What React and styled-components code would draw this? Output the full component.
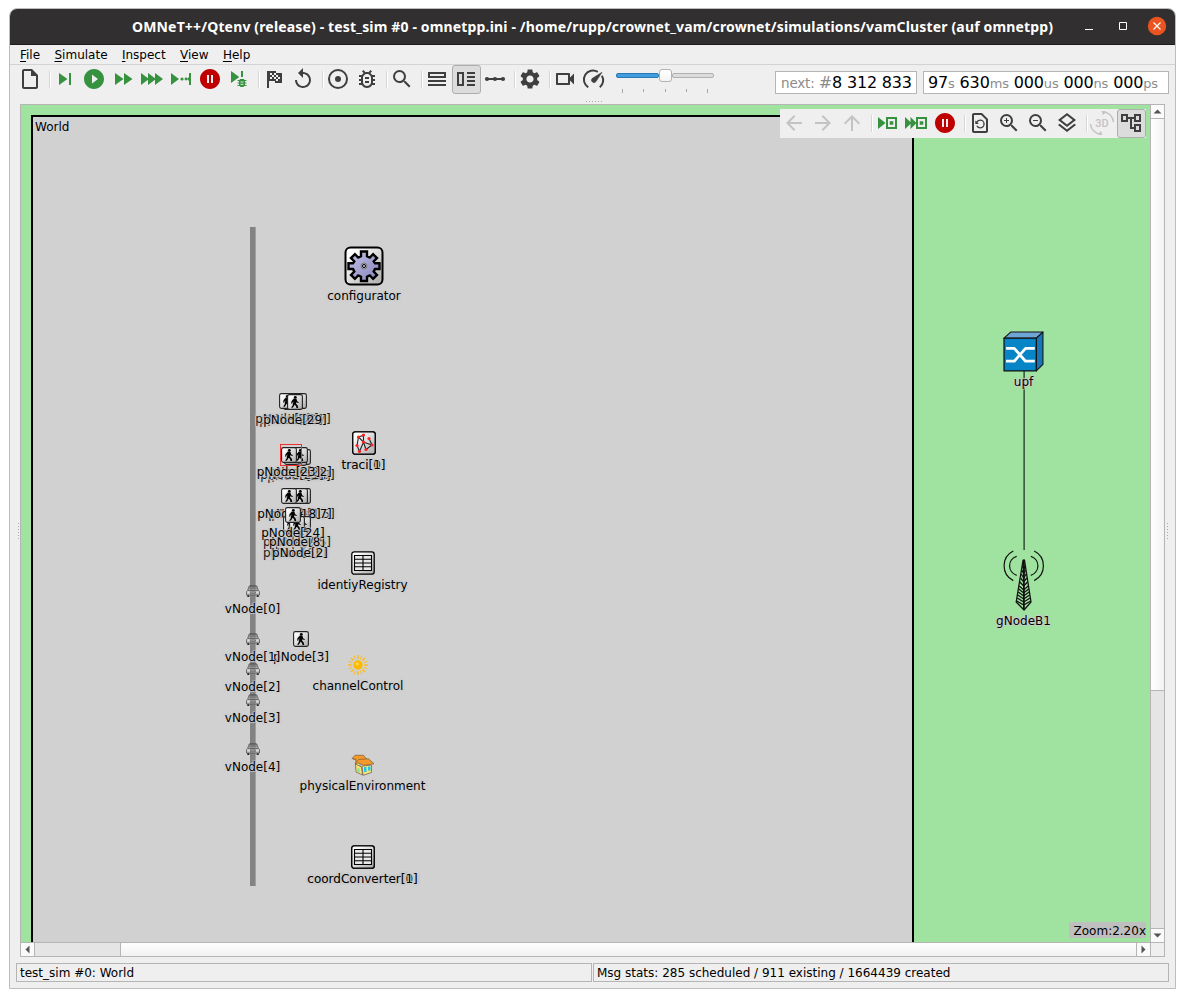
import React from 'react';
import styled, { createGlobalStyle, css } from 'styled-components';
import {
  MdOutlineInsertDriveFile, MdSkipNext, MdPlayCircleFilled, MdFastForward, MdPauseCircleFilled,
  MdReplay, MdOutlineBugReport, MdSearch, MdSettings, MdOutlineVideocam, MdArrowBack,
  MdArrowForward, MdArrowUpward, MdOutlineRestorePage, MdZoomIn, MdZoomOut, MdOutlineLayers,
  MdOutlineAccountTree,
} from 'react-icons/md';

const GlobalStyle = createGlobalStyle`
  * { box-sizing: border-box; }
  body { margin: 0; background: #fff; font: 12px/14px "DejaVu Sans", sans-serif; color: #000; }
  svg { display: block; flex: none; }
`;

const GREEN = '#37923f';
const DARK = '#3f3f3f';
const RED = '#bf0000';
const OFF = '#c3c3c3';

const Page = styled.div`
  width: 1185px;
  height: 998px;
  padding: 8px 9px 9px;
  overflow: hidden;
`;
const Window = styled.div`
  width: 1167px;
  height: 981px;
  display: flex;
  flex-direction: column;
  background: #efefef;
  border: 1px solid #bdbdbd;
  border-radius: 8px 8px 0 0;
  overflow: hidden;
`;
const TitleBar = styled.header`
  height: 36px;
  flex: none;
  display: flex;
  align-items: center;
  background: #322f30;
  border-bottom: 1px solid #1d1b1c;
  color: #fff;
`;
const Title = styled.h1`
  margin: 0;
  padding-left: 122px;
  width: 1062px;
  white-space: nowrap;
  font: bold 14px/20px "Noto Sans", sans-serif;
  letter-spacing: 0.155px;
`;
const WindowButton = styled.button`
  width: 34px;
  height: 32px;
  margin-bottom: 2px;
  padding: 0;
  border: 0;
  background: none;
  display: flex;
  align-items: center;
  justify-content: center;
`;
const MenuBar = styled.nav`
  height: 20px;
  flex: none;
  display: flex;
  gap: 14.4px;
  padding: 3px 10px 0;
  border-bottom: 1px solid #d3d3d3;
`;
const MenuItem = styled.div`
  &::first-letter { text-decoration: underline; text-underline-offset: 2px; }
`;
const ToolRow = styled.div`
  height: 33px;
  flex: none;
  display: flex;
  padding-left: 6px;
`;
const ToolButton = styled.button`
  width: 29px;
  height: 29px;
  flex: none;
  display: flex;
  align-items: flex-start;
  justify-content: flex-start;
  padding: 2px;
  border: 0;
  border-radius: 3px;
  background: none;
  color: ${(p) => p.$color || DARK};
  ${(p) => p.$active && css`
    padding: 1px;
    border: 1px solid #adadad;
    background: #dcdcdc;
  `}
`;
const Separator = styled.span`
  width: 6px;
  height: 17px;
  margin-top: 6px;
  flex: none;
  border-left: 1px solid #d6d6d6;
  box-shadow: inset 1px 0 #fff;
  margin-left: 4px;
  margin-right: -4px;
`;
const SliderBox = styled.div`
  width: 98px;
  margin-left: 7px;
  padding-top: 4px;
`;
const Track = styled.div`
  height: 13px;
  display: flex;
  align-items: center;
`;
const Groove = styled.span`
  height: 5px;
  width: ${(p) => p.$w}px;
  border: 1px solid ${(p) => (p.$on ? '#2a79b0' : '#b0b0b0')};
  background: ${(p) => (p.$on ? '#3f9de0' : '#dcdcdc')};
  border-radius: 2px;
`;
const Thumb = styled.span`
  width: 13px;
  height: 13px;
  border: 1px solid #b2b2b2;
  border-radius: 3px;
  background: linear-gradient(#fff, #f4f4f4);
`;
const Ticks = styled.div`
  display: flex;
  justify-content: space-between;
  padding: 0 6px;
  margin-top: 7px;
`;
const Tick = styled.i`
  width: 1px;
  height: ${(p) => (p.$long ? 4 : 3)}px;
  background: #a8a8a8;
`;
const Readout = styled.div`
  width: ${(p) => p.$w}px;
  height: 23px;
  margin: 6px 0 0 ${(p) => p.$gap}px;
  padding-left: ${(p) => p.$pad}px;
  border: 1px solid #b5b5b5;
  background: #fff;
  font-size: 16px;
  line-height: 21px;
  letter-spacing: ${(p) => p.$tracking || 0}px;
  white-space: pre;
  flex: none;
`;
const Unit = styled.span`
  font-size: ${(p) => p.$size || 13}px;
  color: #8c8c8c;
`;
const Hash = styled.span`
  color: #8c8c8c;
`;
const Grip = styled.div`
  height: 6px;
  flex: none;
  display: flex;
  justify-content: center;
  gap: 2px;
  padding: 3px 0 0 2px;
  i { width: 1px; height: 1px; background: #aaa; }
`;
const Middle = styled.main`
  display: flex;
  flex: none;
  height: 853px;
`;
const SideGrip = styled.div`
  width: ${(p) => p.$w}px;
  display: flex;
  flex-direction: column;
  align-items: center;
  justify-content: center;
  gap: 2px;
  padding-left: ${(p) => p.$pad}px;
  i { width: 1px; height: 1px; background: #aaa; }
`;
const Frame = styled.div`
  width: 1145px;
  height: 853px;
  flex: none;
  display: grid;
  grid-template-columns: 1129px 14px;
  grid-template-rows: 837px 14px;
  border: 1px solid #b5b5b5;
`;
const Scene = styled.div`
  position: relative;
  overflow: hidden;
  background: #a0e2a0;
`;
const World = styled.div`
  width: 883px;
  height: 840px;
  margin: 10px 0 0 10px;
  padding: 3px 2px;
  border: 2px solid #000;
  background: #d1d1d1;
`;
const Road = styled.div`
  position: absolute;
  left: 229px;
  top: 122px;
  width: 6px;
  height: 659px;
  background: #838383;
  border-right: 1px solid #a0a0a0;
`;
const Link = styled.div`
  position: absolute;
  left: 1002px;
  top: 266px;
  width: 2px;
  height: 179px;
  background: linear-gradient(90deg, #5d855d 50%, #426042 50%);
`;
const Node = styled.div`
  position: absolute;
  left: ${(p) => p.$x}px;
  top: ${(p) => p.$y}px;
  width: 0;
  display: flex;
  flex-direction: column;
  align-items: center;
`;
const Label = styled.span`
  margin-top: ${(p) => (p.$gap === undefined ? 3 : p.$gap)}px;
  line-height: 14px;
  white-space: nowrap;
  color: ${(p) => (p.$dim ? '#181818' : '#000')};
  text-shadow: ${['1px 0', '-1px 0', '0 1px', '0 -1px', '1px 1px', '-1px 1px', '1px -1px', '-1px -1px']
    .map((o) => `${o} 1px rgba(209,209,209,.5)`).join(',')};
`;
const FloatBar = styled.div`
  position: absolute;
  left: 759px;
  top: 4px;
  display: flex;
  background: #efefef;
`;
const ZoomBadge = styled.div`
  position: absolute;
  right: 4px;
  bottom: 4px;
  width: 77px;
  height: 16px;
  padding-top: 1px;
  text-align: right;
  line-height: 16px;
  background: #bfbfbf;
`;
const VScroll = styled.div`
  display: flex;
  flex-direction: column;
  border-left: 1px solid #b5b5b5;
  background: #e5e5e5;
`;
const HScroll = styled.div`
  display: flex;
  border-top: 1px solid #b5b5b5;
  background: #e5e5e5;
`;
const ScrollArrow = styled.button`
  width: 13px;
  height: 13px;
  flex: none;
  padding: 0;
  border: 0;
  display: flex;
  align-items: center;
  justify-content: center;
  background: #fafafa;
`;
const VHandle = styled.div`
  height: 573px;
  border: solid #b5b5b5;
  border-width: 1px 0;
  background: linear-gradient(90deg, #fff, #f3f3f3);
`;
const HHandle = styled.div`
  width: 1017px;
  border: solid #b5b5b5;
  border-width: 0 1px;
  background: linear-gradient(#fff, #f1f1f1);
`;
const Trough = styled.div`
  flex: 1;
  border: 0 solid #b5b5b5;
  border-left-width: ${(p) => (p.$v ? 0 : 1)}px;
  border-bottom-width: ${(p) => (p.$v ? 1 : 0)}px;
`;
const Corner = styled.div`
  border: solid #b5b5b5;
  border-width: 1px 0 0 1px;
`;
const StatusBar = styled.footer`
  display: flex;
  gap: 1px;
  padding: 6px 6px 0;
`;
const StatusCell = styled.div`
  width: 576px;
  height: 19px;
  border: 1px solid #b5b5b5;
  padding-left: 3px;
  line-height: 18px;
`;

const Ic = ({ children, fill = 'currentColor', size, ...rest }) => (
  <svg width="24" height="24" viewBox="0 0 24 24" fill={fill} {...rest}>{children}</svg>
);
const Express = () => <Ic><path d="M1 6l8 6-8 6zM8 6l8 6-8 6zM15 6l8 6-8 6z" /></Ic>;
const Until = () => (
  <Ic><path d="M2 6l8 6-8 6zM20 6h2v12h-2v-4l-2-2 2-2z" /><circle cx="13" cy="12" r="1.6" /><circle cx="17" cy="12" r="1.4" /></Ic>
);
const DebugNext = () => (
  <Ic>
    <path d="M4 4l8.300 6L4 16zM14 4h2v6h-2z" />
    <path d="M13 12h4l1 2v4l-1.500 2h-3L12 18v-4z" />
    <path d="M10.500 13.500h9M10.500 16h9M10.500 18.500h9" stroke="currentColor" strokeWidth="1" />
    <path d="M13.500 15h3M13.500 17.300h3" stroke="#efefef" strokeWidth=".9" />
  </Ic>
);
const Flag = () => (
  <Ic>
    <path d="M5 4h2v17H5z" />
    <path d="M6 4h8v2h6v10h-7v-2H6z" />
    <path d="M8 6h2v2H8zM12 6h2v2h-2zM10 8h2v2h-2zM14 8h2v2h-2zM8 10h2v2H8zM12 10h2v2h-2zM16 10h2v2h-2zM14 12h2v2h-2z" fill="#efefef" />
  </Ic>
);
const Target = () => <Ic><circle cx="12" cy="12" r="9" fill="none" stroke="currentColor" strokeWidth="2" /><circle cx="12" cy="12" r="3" /></Ic>;
const Rows = () => <Ic fill="none" stroke="currentColor" strokeWidth="2"><path d="M4 6h16v4H4zM3 14h18M3 18h18" /></Ic>;
const Split = () => <Ic fill="none" stroke="currentColor" strokeWidth="2"><path d="M4 6h5v12H4zM13 6h8M13 10h8M13 14h8M13 18h8" /></Ic>;
const Timeline = () => <Ic><path d="M3 11h18v2H3z" /><circle cx="4" cy="12" r="2.100" /><circle cx="12" cy="12" r="2.100" /><circle cx="20" cy="12" r="2.100" /></Ic>;
const Gauge = () => (
  <Ic>
    <path d="M6.200 20.300A9 9 0 0 1 15.800 4.800M19.900 8.700a9 9 0 0 1-2.100 11.600" fill="none" stroke="currentColor" strokeWidth="2" />
    <path d="M20 5.300l-6 9.300a2.500 2.500 0 0 1-4-3z" stroke="currentColor" strokeWidth=".6" strokeLinejoin="round" />
  </Ic>
);
const ModStep = () => <Ic><path d="M3 6l7.500 6L3 18zM11 6h11v12H11zm2 2v8h7V8z" fillRule="evenodd" /><path d="M14.700 10.200h3.600v3.600h-3.600z" /></Ic>;
const ModFast = () => <Ic><path d="M1 6l6.500 6L1 18zM6.500 6l6 6-6 6z" /><path d="M12 6h11v12H12zm2 2v8h7V8z" fillRule="evenodd" /><path d="M15.700 10.200h3.600v3.600h-3.600z" /></Ic>;
const Rotate3D = () => (
  <Ic overflow="visible">
    <text x="12" y="16" textAnchor="middle" fontFamily="Roboto, sans-serif" fontSize="11" fontWeight="500">3D</text>
    <path d="M13 1c6 .2 10 4.500 10.500 10M11 23C5 22.800 1 18.500.5 13" fill="none" stroke="currentColor" strokeWidth="1.500" />
    <path d="M11.500 0l5 .5-3.500 3.500zM12.500 24l-5-.5 3.500-3.500z" />
  </Ic>
);

const mainTools = [
  [MdOutlineInsertDriveFile, DARK], null,
  [MdSkipNext, GREEN], [MdPlayCircleFilled, GREEN], [MdFastForward, GREEN], [Express, GREEN],
  [Until, GREEN], [MdPauseCircleFilled, RED], [DebugNext, GREEN], null,
  [Flag, DARK], [MdReplay, DARK], null,
  [Target, DARK], [MdOutlineBugReport, DARK], null,
  [MdSearch, DARK], null,
  [Rows, DARK], [Split, DARK, true], [Timeline, DARK], null,
  [MdSettings, DARK], null,
  [MdOutlineVideocam, DARK], [Gauge, DARK],
];
const viewTools = [
  [MdArrowBack, OFF], [MdArrowForward, OFF], [MdArrowUpward, OFF], null,
  [ModStep, GREEN], [ModFast, GREEN], [MdPauseCircleFilled, RED], null,
  [MdOutlineRestorePage, DARK], [MdZoomIn, DARK], [MdZoomOut, DARK], [MdOutlineLayers, DARK], null,
  [Rotate3D, OFF], [MdOutlineAccountTree, DARK, true],
];
const Tools = ({ items }) => items.map((t, i) => {
  if (!t) return <Separator key={i} />;
  const [Icon, color, active] = t;
  return <ToolButton key={i} $color={color} $active={active}><Icon size={24} /></ToolButton>;
});

const HiddenDefs = styled.svg`
  position: absolute;
`;
const Defs = () => (
  <HiddenDefs width="0" height="0">
    <defs>
      <linearGradient id="plate" x1="0" y1="0" x2="1" y2="1">
        <stop offset="0.15" stopColor="#fff" /><stop offset="1" stopColor="#aaa" />
      </linearGradient>
      <linearGradient id="gear" x1="0" y1="0" x2="1" y2="1">
        <stop offset="0" stopColor="#c4c2ea" /><stop offset="1" stopColor="#8582b8" />
      </linearGradient>
    </defs>
  </HiddenDefs>
);
const Walker = () => (
  <svg width="16" height="16" viewBox="0 0 16 16">
    <rect x=".6" y=".6" width="14.8" height="14.8" rx="1.8" fill="url(#plate)" stroke="#222" strokeWidth="1.1" />
    <circle cx="8.300" cy="3.300" r="1.400" />
    <path d="M6.800 4.600h2.600l.8 2.600 1.700 1-.5.900-2.100-.9-.2 1.500 1.600 1.700.5 2.600H9.500l-.5-2-1.500-1.300-.8 1.800-1.500 1.500-1-.6 1.400-1.900.8-4-.8.7-.4 1.600-1.100-.2.400-2.400z" />
  </svg>
);
const Car = () => (
  <svg width="16" height="16" viewBox="0 0 16 16">
    <path d="M4.200 3h7.600l1.500 4.300 1.200 1.200v3.500H1.500V8.500l1.200-1.200z" fill="#b5b5b5" fillOpacity=".6" stroke="#555" strokeWidth=".8" />
    <path d="M4.500 3h7M4 5h8M3 7.300h10" stroke="#444" strokeWidth=".8" />
    <path d="M2.500 9.300h2.300M11.200 9.300h2.300" stroke="#ddd" strokeWidth="1.300" />
    <path d="M5.500 9h5v1.500h-5z" fill="none" stroke="#666" strokeWidth=".6" />
    <path d="M2.300 12.300h2V14h-2zM11.700 12.300h2V14h-2z" fill="#222" />
  </svg>
);
const Table = () => (
  <svg width="24" height="24" viewBox="0 0 24 24">
    <rect x=".8" y=".8" width="22.400" height="22.400" rx="2.500" fill="url(#plate)" stroke="#000" strokeWidth="1.300" />
    <path d="M3.500 4.500h17v15h-17z" fill="#e8e8e8" />
    <path d="M3.500 4.500h17v15h-17zM12 4.500v15M3.500 8.300h17M3.500 12h17M3.500 15.800h17" fill="none" stroke="#000" strokeWidth="1.100" />
  </svg>
);
const Traci = () => (
  <svg width="24" height="24" viewBox="0 0 24 24">
    <rect x=".8" y=".8" width="22.400" height="22.400" rx="2.500" fill="url(#plate)" stroke="#000" strokeWidth="1.300" />
    <path d="M6.500 6l5-1.800v7L20 14l-6 4.500M6.500 6L5 14.500 7.500 20.500l4-9.300L6.500 6M11.500 11.200L14 18.500M17 7.500l3 6.500" fill="none" stroke="#222" strokeWidth="1.100" />
    {[[6.5, 6], [11.5, 4], [11.5, 11], [17, 7.5], [5, 14.5], [20, 14], [14, 18.5], [7.5, 20.5]].map(([x, y]) => <circle key={`${x}-${y}`} cx={x} cy={y} r="1.600" fill="#f22" />)}
  </svg>
);
const Gear = () => (
  <svg width="40" height="40" viewBox="0 0 40 40">
    <rect x="1.500" y="1.500" width="37" height="37" rx="5" fill="url(#plate)" stroke="#000" strokeWidth="2" />
    <path d="M17 5.500h6v4.800l2.800 1.200 3.300-3.300 3.900 3.900-3.300 3.300L31 17.300h4.500v5.700H31l-1.300 2.600 3.300 3.300-3.900 3.900-3.300-3.300-2.800 1.200V35h-6v-4.300l-2.800-1.200-3.300 3.300-3.900-3.900 3.300-3.300L9 23H4.500v-5.700H9l1.300-1.900L7 12.100l3.900-3.900 3.300 3.300 2.800-1.200z" fill="url(#gear)" stroke="#000" strokeWidth="2.400" />
    <circle cx="20" cy="20" r="3" fill="#ddd" stroke="#777" strokeWidth="1" /><circle cx="20" cy="20" r="1.700" fill="#99c" stroke="#111" />
  </svg>
);
const Sun = () => (
  <svg width="22" height="22" viewBox="0 0 22 22">
    {Array.from({ length: 16 }, (_, i) => (
      <path key={i} d="M11 4.800V1" stroke="#fdbb10" strokeWidth={i % 2 ? 0.9 : 1.4} transform={`rotate(${i * 22.5} 11 11)`} />
    ))}
    <circle cx="11" cy="11" r="4.700" fill="#fdb900" /><circle cx="10.300" cy="10" r="1.800" fill="#ffd540" />
  </svg>
);
const House = () => (
  <svg width="24" height="22" viewBox="0 0 24 22">
    <path d="M2 5h3v10l4 3V6z" fill="#f4e16c" stroke="#765" strokeWidth=".7" />
    <path d="M1 4.500L4 1.300h8.500l3 3.700-6 2-4 1.500L4.500 5z" fill="#f59a28" stroke="#864" strokeWidth=".8" />
    <path d="M4.500 10l6 3 1 8-6.500-3zM11 12l9.500-1v7.500L12 21.300z" fill="#f5e476" stroke="#765" strokeWidth=".8" />
    <path d="M4 9.500l3.500-4 10-.7 5.500 5-10.500 1.600-4.500-2.400z" fill="#f59a28" stroke="#864" strokeWidth=".8" />
    <path d="M13 13h2.500v5H13zM17 12.500h2.500v4H17z" fill="#20c6ee" /><path d="M6.500 14l2 1v3.700l-2-1z" fill="#72e09c" />
  </svg>
);
const Switch = () => (
  <svg width="41" height="41" viewBox="0 0 40 40" preserveAspectRatio="none" strokeLinejoin="round">
    <path d="M1 7L7.500 1H39L32.500 7z" fill="#6fa5d5" stroke="#111" />
    <path d="M32.500 7L39 1v31.500L32.500 39z" fill="#1975b5" stroke="#111" />
    <path d="M1 7h31.500v32H1z" fill="#0785c7" stroke="#111" strokeWidth="1.200" />
    <path d="M3 17h8l11 12.500h9M3 29.500h8L22 17h9" fill="none" stroke="#fff" strokeWidth="2.700" />
  </svg>
);
const Tower = () => (
  <svg width="43" height="62" viewBox="0 0 43 62" fill="none" stroke="#111">
    <path d="M11.300 2a16.500 16.500 0 0 0 0 29.600M14.700 7.300a9.900 9.900 0 0 0 0 19M32.200 2a16.500 16.500 0 0 1 0 29.600M28.800 7.300a9.900 9.900 0 0 1 0 19" strokeWidth="1.200" />
    <path d="M21 11.500L14.200 53l7.800 8 7-8-6.500-41.500z" strokeWidth="1.300" />
    <path d="M21.900 10.500v50" strokeWidth="1.800" />
    {[17, 21, 25, 29, 33, 37, 40, 43, 46, 49, 52].map((y) => {
      const w = (y - 10) * 0.165;
      return <path key={y} d={`M${21.7 - w} ${y}l${w} 4 ${w}-4`} strokeWidth="1.300" />;
    })}
  </svg>
);
const Selection = styled.div`
  position: absolute;
  left: 259px;
  top: 339px;
  width: 22px;
  height: 22px;
  border: 1px solid #f03030;
`;

const shapes = { walker: Walker, car: Car, table: Table, traci: Traci, gear: Gear, sun: Sun, house: House, sw: Switch, tower: Tower };
/* kind, centre x, icon top, label, dimmed, label gap */
const nodes = [
  ['gear', 343, 141, 'configurator'],
  ['walker', 278, 288, 'pNode[27]', true], ['walker', 270, 289, 'pNode[28]', true], ['walker', 266, 288, 'pNode[26]', true], ['walker', 274, 289, 'pNode[29]'],
  ['walker', 282, 344, 'pNode[19]', true], ['walker', 278, 345, 'pNode[20]', true], ['walker', 271, 344, 'pNode[21]', true], ['walker', 279, 342, 'pNode[22]', false, 2], ['walker', 267.5, 342, 'pNode[23]', false, 2],
  ['walker', 282, 383, 'pNode[15]', true], ['walker', 279, 383, 'pNode[17]'], ['walker', 268, 383, 'pNode[18]'],
  ['walker', 278, 421, 'pNode[1]', true, 4], ['walker', 270, 421, 'pNode[6]', true, 4], ['walker', 279, 421, 'pNode[2]', false, 4],
  ['walker', 282, 411, 'pNode[5]', true], ['walker', 270, 411, 'pNode[7]', true], ['walker', 276, 411, 'pNode[8]'],
  ['walker', 272, 402, 'pNode[24]'],
  ['traci', 342.5, 326, 'traci[0]', true], ['traci', 342.5, 326, 'traci[1]'],
  ['table', 341.5, 446, 'identiyRegistry'],
  ['walker', 280, 526, 'pNode[3]'],
  ['car', 231.5, 478, 'vNode[0]'], ['car', 231.5, 526, 'vNode[1]'],
  ['car', 231.5, 556, 'vNode[2]'], ['car', 231.5, 587, 'vNode[3]'], ['car', 231.5, 636, 'vNode[4]'],
  ['sun', 337, 549, 'channelControl'],
  ['house', 341.5, 649, 'physicalEnvironment'],
  ['table', 341.5, 740, 'coordConverter[0]', true], ['table', 341.5, 740, 'coordConverter[1]'],
  ['sw', 1002.5, 226, 'upf'], ['tower', 1002.5, 444, 'gNodeB1'],
];

const Dots = ({ n }) => Array.from({ length: n }, (_, i) => <i key={i} />);
const Arrow = ({ turn }) => (
  <svg width="9" height="9" viewBox="0 0 9 9"><path d="M.5 6.500L4.500 2.500l4 4z" fill="#555" transform={`rotate(${turn} 4.5 4.5)`} /></svg>
);

export default function App() {
  return (
    <Page>
      <GlobalStyle />
      <Defs />
      <Window>
        <TitleBar>
          <Title>OMNeT++/Qtenv (release) - test_sim #0 - omnetpp.ini - /home/rupp/crownet_vam/crownet/simulations/vamCluster (auf omnetpp)</Title>
          <WindowButton><svg width="10" height="10"><path d="M1 8.500h8" stroke="#fff" /></svg></WindowButton>
          <WindowButton><svg width="10" height="10"><path d="M1.500 1.500h7v7h-7z" fill="none" stroke="#fff" /></svg></WindowButton>
          <WindowButton><svg width="20" height="20"><circle cx="10" cy="10" r="9.200" fill="#e95420" /><path d="M6.500 6.500l7 7M13.500 6.500l-7 7" stroke="#fff" strokeWidth="1.200" /></svg></WindowButton>
        </TitleBar>
        <MenuBar>
          {['File', 'Simulate', 'Inspect', 'View', 'Help'].map((m) => <MenuItem key={m}>{m}</MenuItem>)}
        </MenuBar>
        <ToolRow>
          <Tools items={mainTools} />
          <SliderBox>
            <Track><Groove $w={43} $on /><Thumb /><Groove $w={42} /></Track>
            <Ticks>{[0, 1, 2, 3, 4].map((i) => <Tick key={i} $long={i % 4 === 0} />)}</Ticks>
          </SliderBox>
          <Readout $w={142} $gap={61} $pad={5} $tracking={-0.17}><Unit $size={13.5}>next: </Unit><Hash>#</Hash>8 312 833</Readout>
          <Readout $w={246} $gap={6} $pad={4} $tracking={-0.16}>97<Unit>s</Unit> 630<Unit>ms</Unit> 000<Unit>us</Unit> 000<Unit>ns</Unit> 000<Unit>ps</Unit></Readout>
        </ToolRow>
        <Grip><Dots n={6} /></Grip>
        <Middle>
          <SideGrip $w={10} $pad={7}><Dots n={6} /></SideGrip>
          <Frame>
            <Scene>
              <World>World</World>
              <Road />
              <Link />
              {nodes.map(([kind, x, y, text, dim, gap], i) => {
                const Shape = shapes[kind];
                return <Node key={i} $x={x} $y={y}><Shape /><Label $dim={dim} $gap={gap}>{text}</Label></Node>;
              })}
              <Selection />
              <FloatBar><Tools items={viewTools} /></FloatBar>
              <ZoomBadge>Zoom:2.20x</ZoomBadge>
            </Scene>
            <VScroll>
              <ScrollArrow><Arrow turn={0} /></ScrollArrow>
              <VHandle />
              <Trough $v />
              <ScrollArrow><Arrow turn={180} /></ScrollArrow>
            </VScroll>
            <HScroll>
              <ScrollArrow><Arrow turn={-90} /></ScrollArrow>
              <Trough />
              <HHandle />
              <ScrollArrow><Arrow turn={90} /></ScrollArrow>
            </HScroll>
            <Corner />
          </Frame>
          <SideGrip $w={4} $pad={0}><Dots n={6} /></SideGrip>
        </Middle>
        <StatusBar>
          <StatusCell>test_sim #0: World</StatusCell>
          <StatusCell>Msg stats: 285 scheduled / 911 existing / 1664439 created</StatusCell>
        </StatusBar>
      </Window>
    </Page>
  );
}
